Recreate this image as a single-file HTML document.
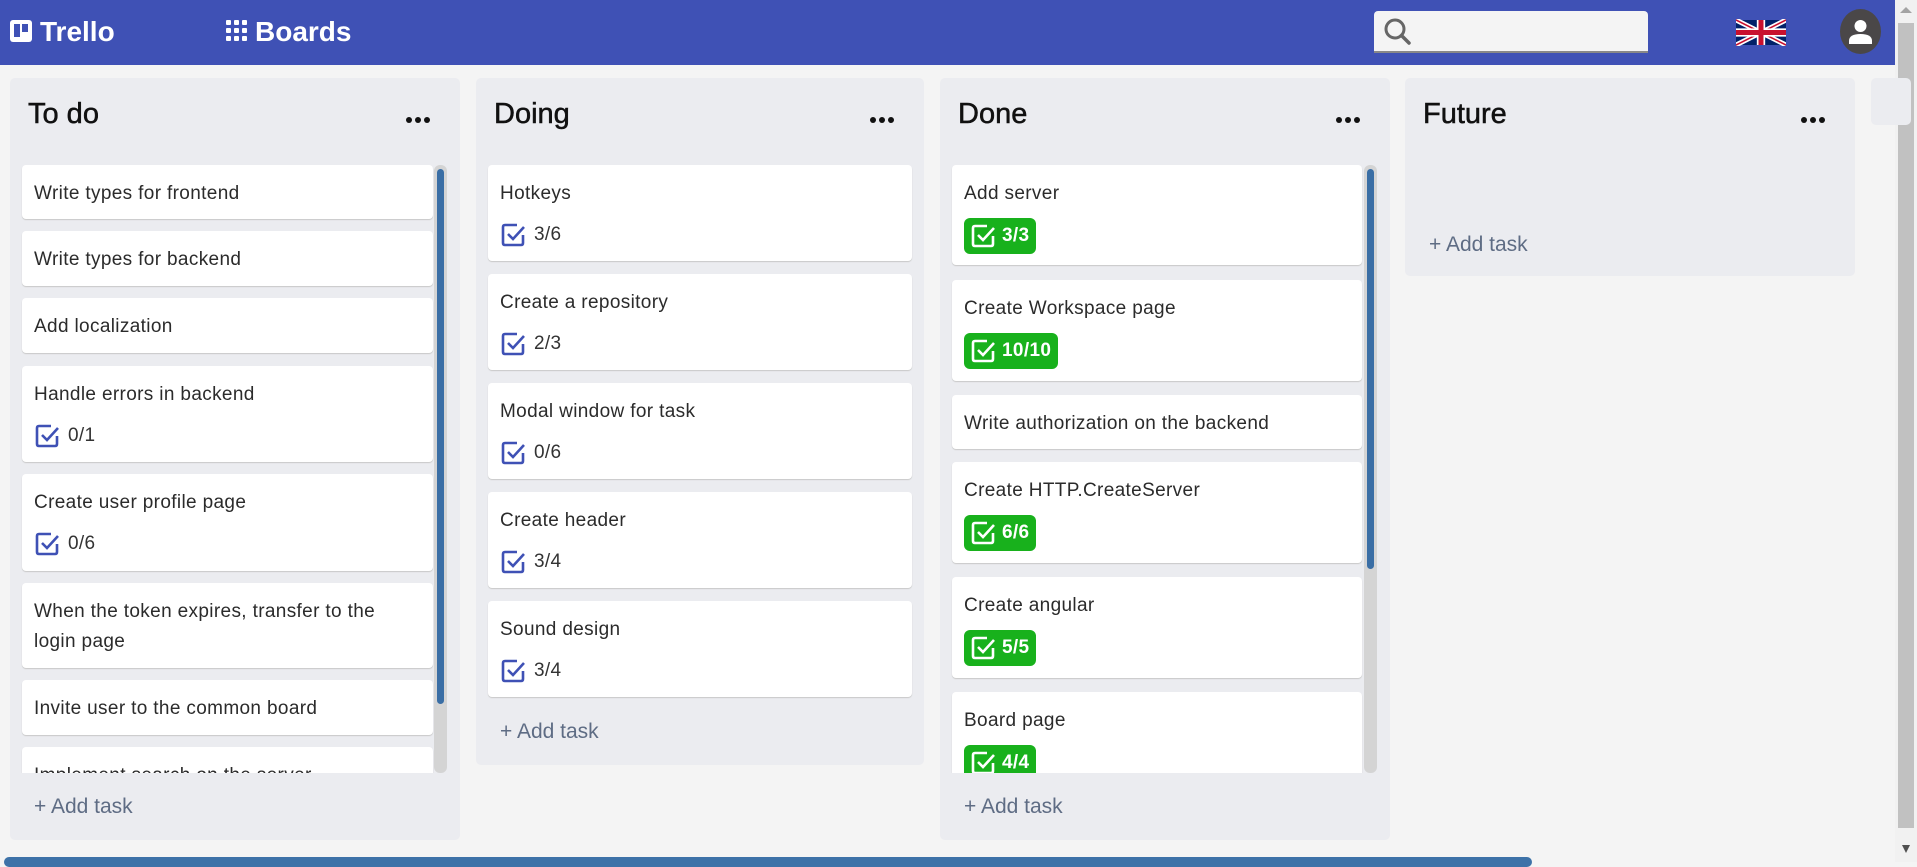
<!DOCTYPE html>
<html><head><meta charset="utf-8"><style>
*{margin:0;padding:0;box-sizing:border-box}
body{width:1917px;height:862px;overflow:hidden;background:#f4f4f4;font-family:"Liberation Sans",sans-serif;position:relative}
.hdr{position:absolute;left:0;top:0;width:1895px;height:65px;background:#3f51b5;color:#fff}
.abs{position:absolute}
.list{position:absolute;background:#ebecf0;border-radius:5px}
.title{position:absolute;left:18px;top:20px;font-size:29px;color:#111;-webkit-text-stroke:0.5px #111}
.dots{position:absolute;top:39px;width:26px;height:6px}
.dots i{position:absolute;top:0;width:6px;height:6px;border-radius:50%;background:#111}
.card{position:absolute;background:#fff;border-radius:4px;box-shadow:0 1px 1px #c8c8c8;font-size:19px;color:#2b2b2b;letter-spacing:.35px;padding:14px 12px 0 12px;line-height:30px}
.b{position:absolute;left:12px;font-size:19px;color:#333;display:flex;align-items:center;gap:8px;height:30px}
.g{background:#18b11c;color:#fff;border-radius:6px;padding:0 7px 0 6px;height:36px;font-weight:bold;gap:6px;left:12px}
.add{position:absolute;font-size:21px;color:#5e6c84}
.track{position:absolute;width:13px;background:#d4d4d4;border-radius:6px}
.thumb{position:absolute;left:3px;width:7px;background:#3a6ea5;border-radius:4px}
.clip{position:absolute;overflow:hidden}
</style></head><body>
<div class="hdr">
 <svg class="abs" style="left:10px;top:20px" width="22" height="22" viewBox="0 0 22 22"><rect x="0" y="0" width="22" height="22" rx="3" fill="#fff"/><rect x="4" y="4" width="6" height="13" fill="#3f51b5"/><rect x="12" y="4" width="6" height="8" fill="#3f51b5"/></svg>
 <div class="abs" style="left:40px;top:16px;font-size:28px;font-weight:bold">Trello</div>
 <svg class="abs" style="left:226px;top:20px" width="22" height="22" viewBox="0 0 22 22" fill="#fff"><rect x="0" y="0" width="5" height="5" rx="1"/><rect x="8" y="0" width="5" height="5" rx="1"/><rect x="16" y="0" width="5" height="5" rx="1"/><rect x="0" y="8" width="5" height="5" rx="1"/><rect x="8" y="8" width="5" height="5" rx="1"/><rect x="16" y="8" width="5" height="5" rx="1"/><rect x="0" y="16" width="5" height="5" rx="1"/><rect x="8" y="16" width="5" height="5" rx="1"/><rect x="16" y="16" width="5" height="5" rx="1"/></svg>
 <div class="abs" style="left:255px;top:16px;font-size:28px;font-weight:bold">Boards</div>
 <div class="abs" style="left:1374px;top:11px;width:274px;height:42px;background:#f4f4f4;border-radius:4px 4px 0 0;border-bottom:2px solid #888"></div>
 <svg class="abs" style="left:1383px;top:17px" width="30" height="30" viewBox="0 0 30 30"><circle cx="12" cy="12" r="9" fill="none" stroke="#666" stroke-width="3"/><path d="M18.5 18.5 L26 26" stroke="#666" stroke-width="3.5" stroke-linecap="round"/></svg>
 <svg class="abs" style="left:1736px;top:19px" width="50" height="27" viewBox="0 0 60 30"><rect width="60" height="30" fill="#012169"/><path d="M0 0L60 30M60 0L0 30" stroke="#fff" stroke-width="6"/><path d="M0 0L60 30M60 0L0 30" stroke="#C8102E" stroke-width="2"/><path d="M30 0V30M0 15H60" stroke="#fff" stroke-width="10"/><path d="M30 0V30M0 15H60" stroke="#C8102E" stroke-width="6"/></svg>
 <svg class="abs" style="left:1840px;top:9px" width="41" height="45" viewBox="0 0 41 45"><ellipse cx="20.5" cy="22.5" rx="20.5" ry="22.5" fill="#4a4748"/><circle cx="20.5" cy="17" r="6" fill="#fff"/><path d="M9 32 Q9 25 20.5 25 Q32 25 32 32 V35 H9Z" fill="#fff"/></svg>
</div>
<div class="abs" style="left:1895px;top:0;width:22px;height:862px;background:#f1f1f1"></div>
<div class="abs" style="left:1898px;top:23px;width:16px;height:805px;background:#c1c1c1"></div>
<div class="abs" style="left:1900px;top:7px;width:0;height:0;border-left:6px solid transparent;border-right:6px solid transparent;border-bottom:6px solid #a3a3a3"></div>
<div class="abs" style="left:1902px;top:845px;width:0;height:0;border-left:4px solid transparent;border-right:4px solid transparent;border-top:8px solid #505050"></div>
<div class="abs" style="left:4px;top:857px;width:1528px;height:10px;background:#3d72a8;border-radius:6px"></div>

<svg width="0" height="0" style="position:absolute"><defs>
<symbol id="cb" viewBox="0 0 26 26"><path d="M17 3H5Q3 3 3 5V21Q3 23 5 23H21Q23 23 23 21V13" fill="none" stroke="currentColor" stroke-width="2.6"/><path d="M8 12L13 17L24 5" fill="none" stroke="currentColor" stroke-width="2.6"/></symbol>
</defs></svg>

<!-- List 1 -->
<div class="list" style="left:10px;top:78px;width:450px;height:762px">
 <div class="title">To do</div>
 <div class="dots" style="left:396px"><i style="left:0"></i><i style="left:9px"></i><i style="left:18px"></i></div>
 <div class="track" style="left:424px;top:87px;height:608px"><div class="thumb" style="top:4px;height:535px"></div></div>
 <div class="clip" style="left:0;top:87px;width:424px;height:608px">
  <div class="card" style="left:12px;top:0;width:411px;height:54px">Write types for frontend</div>
  <div class="card" style="left:12px;top:66px;width:411px;height:55px">Write types for backend</div>
  <div class="card" style="left:12px;top:133px;width:411px;height:55px">Add localization</div>
  <div class="card" style="left:12px;top:201px;width:411px;height:96px">Handle errors in backend<div class="b" style="top:55px;color:#333"><svg width="26" height="26" style="color:#3f51b5"><use href="#cb"/></svg>0/1</div></div>
  <div class="card" style="left:12px;top:309px;width:411px;height:97px">Create user profile page<div class="b" style="top:55px"><svg width="26" height="26" style="color:#3f51b5"><use href="#cb"/></svg>0/6</div></div>
  <div class="card" style="left:12px;top:418px;width:411px;height:85px">When the token expires, transfer to the login page</div>
  <div class="card" style="left:12px;top:515px;width:411px;height:55px">Invite user to the common board</div>
  <div class="card" style="left:12px;top:582px;width:411px;height:60px">Implement search on the server</div>
 </div>
 <div class="add" style="left:24px;top:717px">+ Add task</div>
</div>

<!-- List 2 -->
<div class="list" style="left:476px;top:78px;width:448px;height:687px">
 <div class="title">Doing</div>
 <div class="dots" style="left:394px"><i style="left:0"></i><i style="left:9px"></i><i style="left:18px"></i></div>
 <div class="card" style="left:12px;top:87px;width:424px;height:96px">Hotkeys<div class="b" style="top:55px"><svg width="26" height="26" style="color:#3f51b5"><use href="#cb"/></svg>3/6</div></div>
 <div class="card" style="left:12px;top:196px;width:424px;height:96px">Create a repository<div class="b" style="top:55px"><svg width="26" height="26" style="color:#3f51b5"><use href="#cb"/></svg>2/3</div></div>
 <div class="card" style="left:12px;top:305px;width:424px;height:96px">Modal window for task<div class="b" style="top:55px"><svg width="26" height="26" style="color:#3f51b5"><use href="#cb"/></svg>0/6</div></div>
 <div class="card" style="left:12px;top:414px;width:424px;height:96px">Create header<div class="b" style="top:55px"><svg width="26" height="26" style="color:#3f51b5"><use href="#cb"/></svg>3/4</div></div>
 <div class="card" style="left:12px;top:523px;width:424px;height:96px">Sound design<div class="b" style="top:55px"><svg width="26" height="26" style="color:#3f51b5"><use href="#cb"/></svg>3/4</div></div>
 <div class="add" style="left:24px;top:642px">+ Add task</div>
</div>

<!-- List 3 -->
<div class="list" style="left:940px;top:78px;width:450px;height:762px">
 <div class="title">Done</div>
 <div class="dots" style="left:396px"><i style="left:0"></i><i style="left:9px"></i><i style="left:18px"></i></div>
 <div class="track" style="left:424px;top:87px;height:608px"><div class="thumb" style="top:4px;height:400px"></div></div>
 <div class="clip" style="left:0;top:87px;width:424px;height:608px">
  <div class="card" style="left:12px;top:0;width:410px;height:100px">Add server<div class="b g" style="top:53px"><svg width="26" height="26" style="color:#fff"><use href="#cb"/></svg>3/3</div></div>
  <div class="card" style="left:12px;top:115px;width:410px;height:101px">Create Workspace page<div class="b g" style="top:53px"><svg width="26" height="26" style="color:#fff"><use href="#cb"/></svg>10/10</div></div>
  <div class="card" style="left:12px;top:230px;width:410px;height:54px">Write authorization on the backend</div>
  <div class="card" style="left:12px;top:297px;width:410px;height:101px">Create HTTP.CreateServer<div class="b g" style="top:53px"><svg width="26" height="26" style="color:#fff"><use href="#cb"/></svg>6/6</div></div>
  <div class="card" style="left:12px;top:412px;width:410px;height:101px">Create angular<div class="b g" style="top:53px"><svg width="26" height="26" style="color:#fff"><use href="#cb"/></svg>5/5</div></div>
  <div class="card" style="left:12px;top:527px;width:410px;height:101px">Board page<div class="b g" style="top:53px"><svg width="26" height="26" style="color:#fff"><use href="#cb"/></svg>4/4</div></div>
 </div>
 <div class="add" style="left:24px;top:717px">+ Add task</div>
</div>

<!-- List 4 -->
<div class="list" style="left:1405px;top:78px;width:450px;height:198px">
 <div class="title">Future</div>
 <div class="dots" style="left:396px"><i style="left:0"></i><i style="left:9px"></i><i style="left:18px"></i></div>
 <div class="add" style="left:24px;top:155px">+ Add task</div>
</div>
<div class="list" style="left:1871px;top:78px;width:40px;height:47px"></div>
</body></html>
